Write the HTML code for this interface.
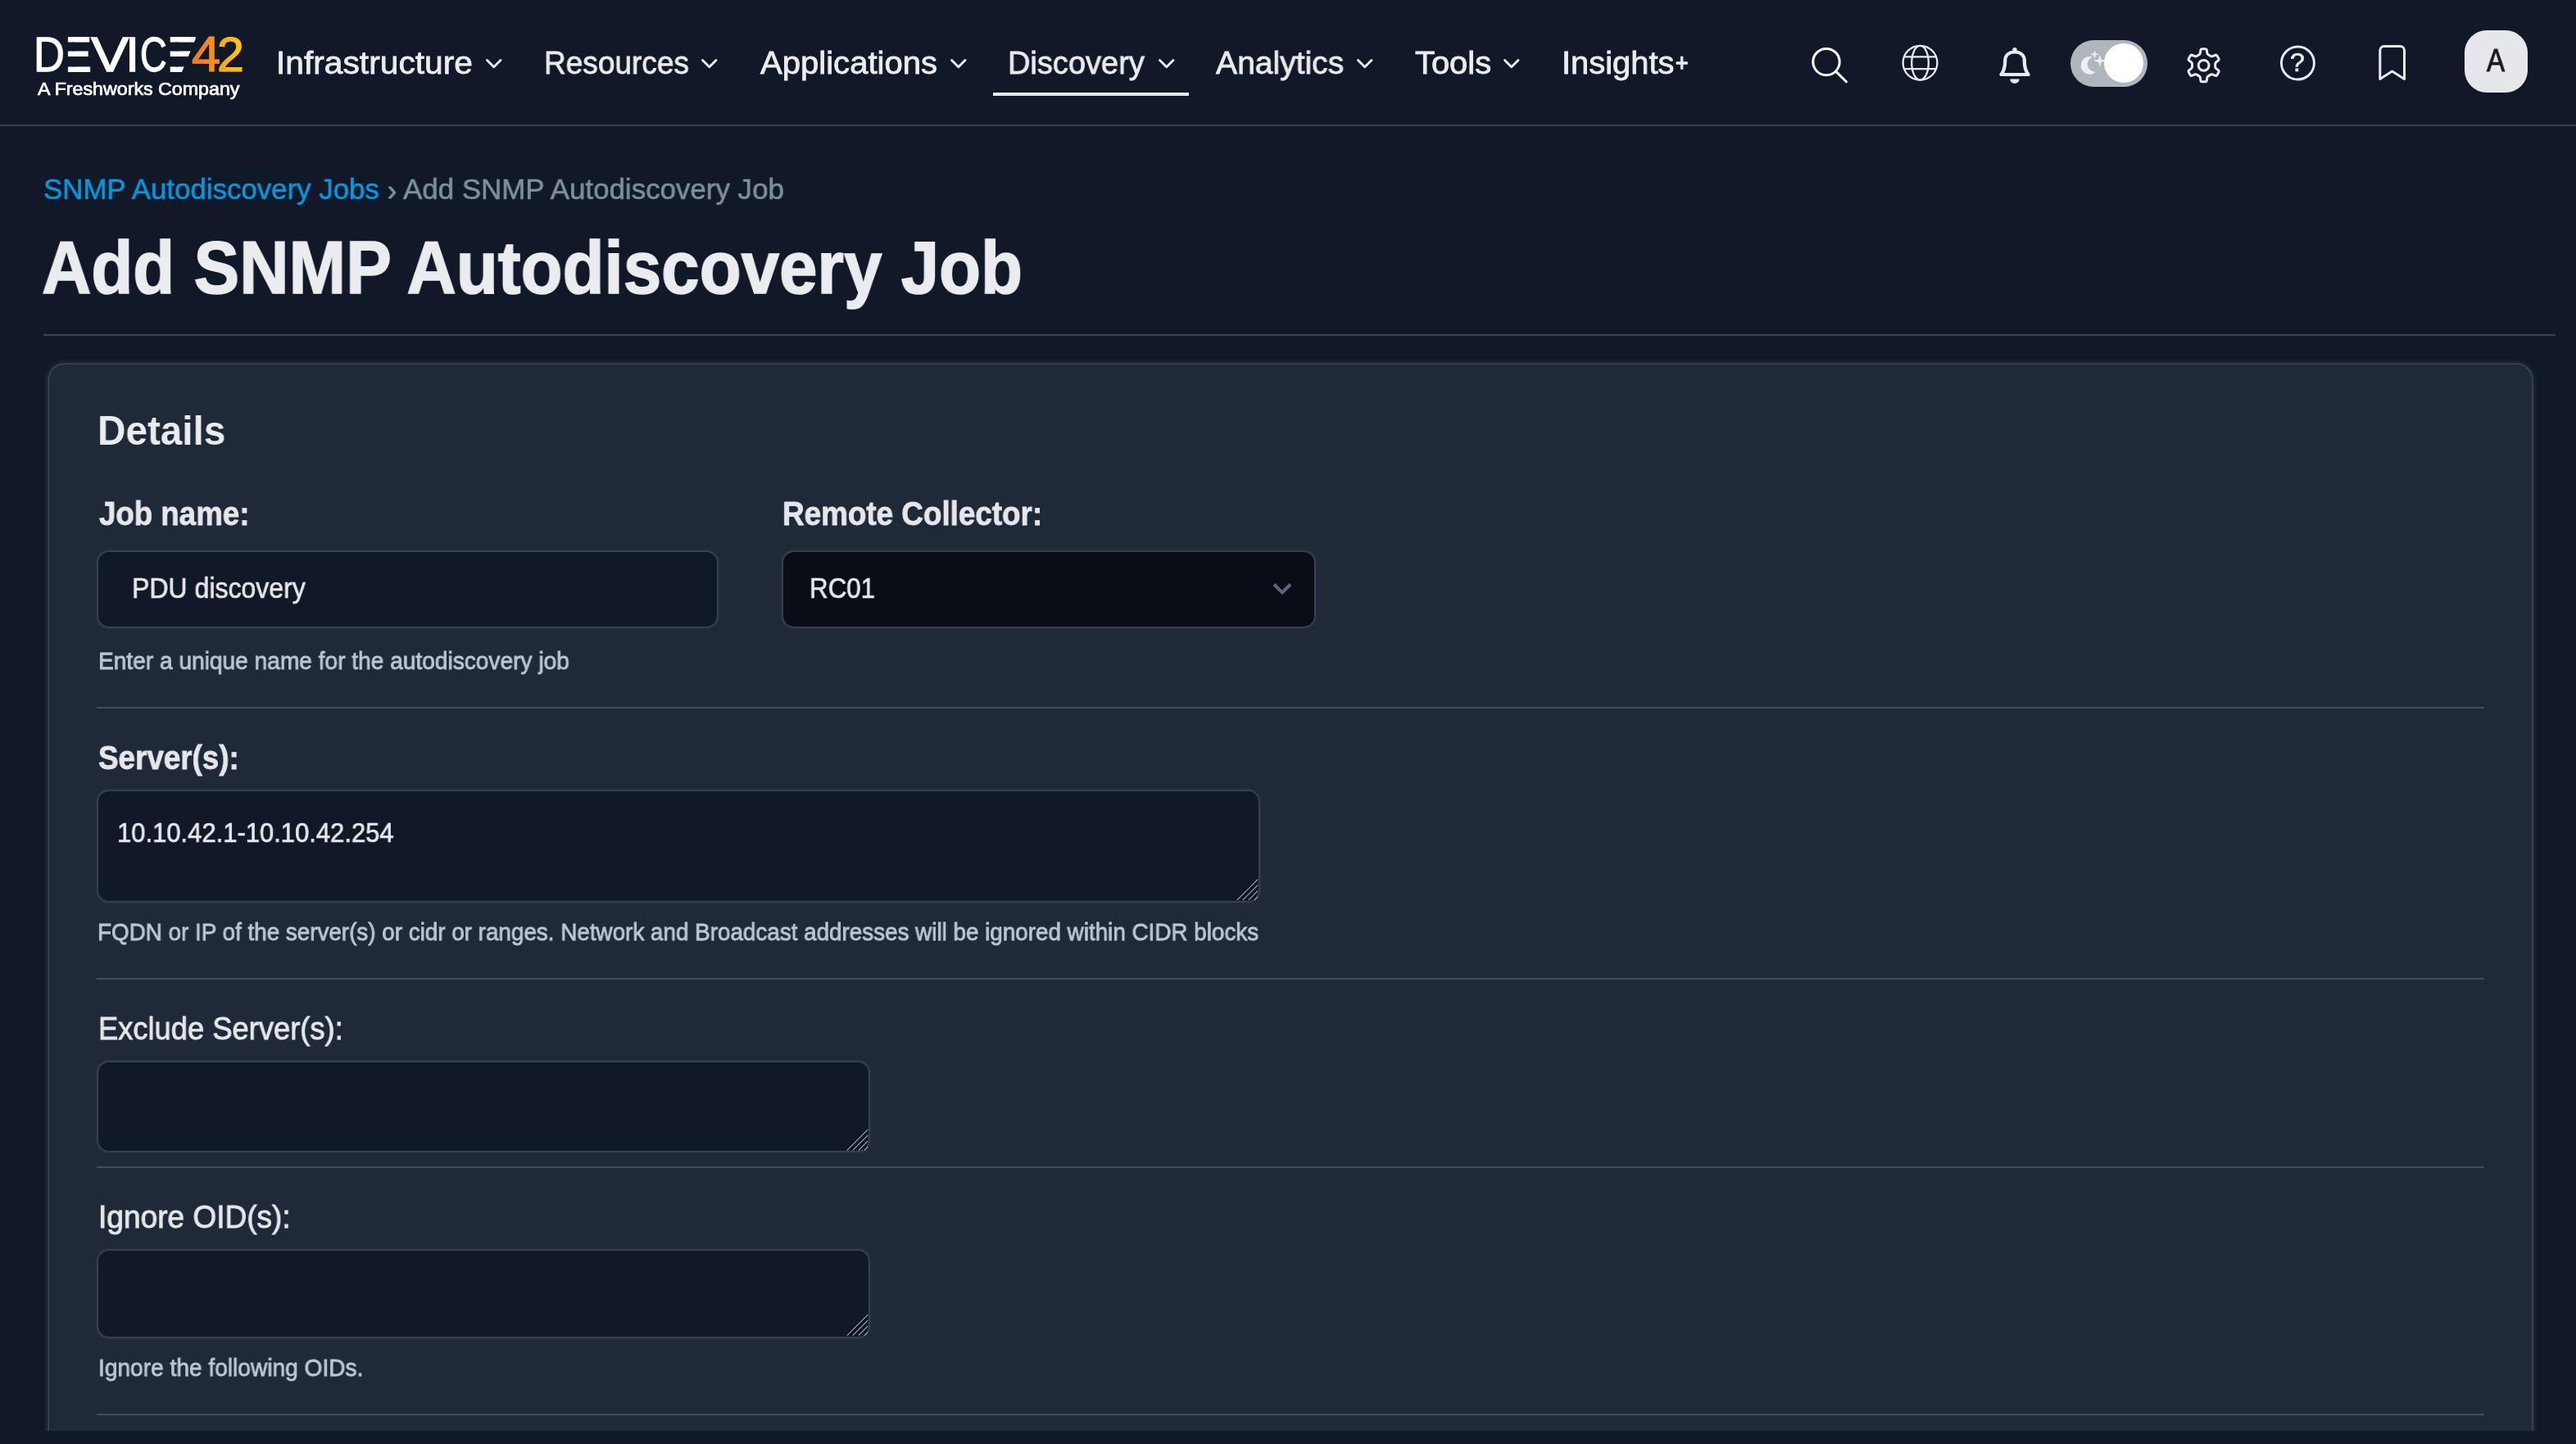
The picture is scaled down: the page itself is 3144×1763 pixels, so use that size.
<!DOCTYPE html>
<html lang="en"><head><meta charset="utf-8"><title>Add SNMP Autodiscovery Job</title>
<style>
html,body{margin:0;padding:0;}
body{width:3144px;height:1763px;overflow:hidden;background:#111827;position:relative;font-family:"Liberation Sans",sans-serif;}
.t{position:absolute;white-space:pre;line-height:1;transform-origin:0 0;display:block;will-change:transform;}
.abs{position:absolute;}
.hr{position:absolute;height:2px;background:#3a4454;}
.card{position:absolute;left:59.5px;top:445px;width:3030px;height:1400px;background:#1f2937;border-radius:19px;box-shadow:0 0 0 1.5px rgba(175,185,205,.16),0 0 7px 1px rgba(175,185,205,.28);box-sizing:border-box;}
.inp{position:absolute;background:#111827;border-radius:13px;box-sizing:border-box;box-shadow:0 0 3.5px 1px rgba(172,182,200,.33);}
.sel{background:#0a0d16;}
.g4{background:linear-gradient(90deg,#ee7727,#f7951d);-webkit-background-clip:text;background-clip:text;color:transparent !important;-webkit-text-stroke-color:rgba(243,134,34,.55) !important;}
.g2{background:linear-gradient(90deg,#f8a01b,#ffd200);-webkit-background-clip:text;background-clip:text;color:transparent !important;-webkit-text-stroke-color:rgba(252,186,14,.55) !important;}
svg{position:absolute;overflow:visible;}
</style></head>
<body>
<div class="abs" style="left:0;top:152px;width:3144px;height:2px;background:#343d4d"></div>
<div class="abs" style="left:1212px;top:113px;width:239px;height:4px;background:#ebecf0"></div>
<div class="hr" style="left:53px;top:408px;width:3066px"></div>
<div class="card"></div>
<div class="hr" style="left:118px;top:863px;width:2914px;background:#434c5b"></div>
<div class="hr" style="left:118px;top:1194px;width:2914px;background:#434c5b"></div>
<div class="hr" style="left:118px;top:1424px;width:2914px;background:#434c5b"></div>
<div class="hr" style="left:118px;top:1726px;width:2914px;background:#434c5b"></div>
<div class="inp" style="left:120px;top:674px;width:754.5px;height:91px"></div>
<div class="inp sel" style="left:956px;top:674px;width:648px;height:91px"></div>
<div class="inp" style="left:120px;top:966px;width:1415.7px;height:133.5px"></div>
<div class="inp" style="left:120px;top:1297px;width:940px;height:108px"></div>
<div class="inp" style="left:120px;top:1526.5px;width:940px;height:105px"></div>
<div class="abs" style="left:0;top:1747px;width:3144px;height:16px;background:#111827"></div>
<svg style="left:592.7px;top:70px" width="20" height="16" viewBox="0 0 20 16"><path d="M1.5 3.5 L9.75 11.7 L18 3.5" fill="none" stroke="#ebecf0" stroke-width="2.9" stroke-linecap="round" stroke-linejoin="round"/></svg>
<svg style="left:856px;top:70px" width="20" height="16" viewBox="0 0 20 16"><path d="M1.5 3.5 L9.75 11.7 L18 3.5" fill="none" stroke="#ebecf0" stroke-width="2.9" stroke-linecap="round" stroke-linejoin="round"/></svg>
<svg style="left:1160px;top:70px" width="20" height="16" viewBox="0 0 20 16"><path d="M1.5 3.5 L9.75 11.7 L18 3.5" fill="none" stroke="#ebecf0" stroke-width="2.9" stroke-linecap="round" stroke-linejoin="round"/></svg>
<svg style="left:1413.7px;top:70px" width="20" height="16" viewBox="0 0 20 16"><path d="M1.5 3.5 L9.75 11.7 L18 3.5" fill="none" stroke="#ebecf0" stroke-width="2.9" stroke-linecap="round" stroke-linejoin="round"/></svg>
<svg style="left:1656px;top:70px" width="20" height="16" viewBox="0 0 20 16"><path d="M1.5 3.5 L9.75 11.7 L18 3.5" fill="none" stroke="#ebecf0" stroke-width="2.9" stroke-linecap="round" stroke-linejoin="round"/></svg>
<svg style="left:1835px;top:70px" width="20" height="16" viewBox="0 0 20 16"><path d="M1.5 3.5 L9.75 11.7 L18 3.5" fill="none" stroke="#ebecf0" stroke-width="2.9" stroke-linecap="round" stroke-linejoin="round"/></svg>
<svg style="left:0;top:0" width="3144" height="160" viewBox="0 0 3144 160"><g fill="none" stroke="#ffffff" stroke-width="3" stroke-linecap="round"><circle cx="2229" cy="75.6" r="16.2"/><path d="M2240.8 87.4 L2253.4 99.8"/></g></svg>
<svg style="left:2320px;top:53px" width="48" height="48" viewBox="0 0 48 48"><g fill="none" stroke="#e8eaee" stroke-width="2.3"><circle cx="23.5" cy="23.7" r="20.9"/><ellipse cx="23.5" cy="23.7" rx="10.3" ry="20.9"/><path d="M4.5 16.4H42.5M4.5 31.2H42.5"/></g></svg>
<svg style="left:0;top:0" width="3144" height="160" viewBox="0 0 3144 160"><path d="M2442.4 91 C2446.8 85.5 2447.2 79.5 2447.2 74.5 C2447.2 67.5 2452 63.5 2459 63.5 C2466 63.5 2470.8 67.5 2470.8 74.5 C2470.8 79.5 2471.2 85.5 2475.6 91 Z" fill="none" stroke="#e8eaee" stroke-width="4.2" stroke-linecap="round" stroke-linejoin="round"/><circle cx="2459" cy="60.7" r="2.7" fill="#e8eaee"/><path d="M2453.2 96.4 h11.4 a5.7 5.6 0 0 1 -11.4 0 z" fill="#e8eaee"/></svg>
<div class="abs" style="left:2527px;top:49px;width:94px;height:57px;border-radius:29px;background:#b0b5be"></div>
<div class="abs" style="left:2568px;top:53px;width:48px;height:48px;border-radius:24px;background:#ffffff"></div>
<svg style="left:0;top:0" width="3144" height="160" viewBox="0 0 3144 160"><path d="M2554 69.6 A10.9 10.9 0 1 0 2558.3 87.6 A9.3 9.3 0 0 1 2554 69.6 Z" fill="#eceef2"/><path d="M2556.50 62.10 L2557.33 65.47 L2560.70 66.30 L2557.33 67.13 L2556.50 70.50 L2555.67 67.13 L2552.30 66.30 L2555.67 65.47Z" fill="#eceef2" stroke="#eceef2" stroke-width="1" stroke-linejoin="round"/><path d="M2562.80 68.20 L2563.99 73.01 L2568.80 74.20 L2563.99 75.39 L2562.80 80.20 L2561.61 75.39 L2556.80 74.20 L2561.61 73.01Z" fill="#eceef2" stroke="#eceef2" stroke-width="1.2" stroke-linejoin="round"/></svg>
<svg style="left:0;top:0" width="3144" height="160" viewBox="0 0 3144 160"><path d="M2695.18 66.75 L2695.18 66.75 Q2694.05 66.10 2693.85 64.82 L2693.29 61.09 Q2693.09 59.80 2691.79 59.80 L2687.41 59.80 Q2686.11 59.80 2685.91 61.09 L2685.35 64.82 Q2685.15 66.10 2684.02 66.75 L2681.09 68.45 Q2679.96 69.10 2678.75 68.63 L2675.24 67.25 Q2674.03 66.78 2673.38 67.90 L2671.19 71.70 Q2670.54 72.82 2671.55 73.64 L2674.50 75.99 Q2675.51 76.81 2675.51 78.11 L2675.51 81.49 Q2675.51 82.79 2674.50 83.61 L2671.55 85.96 Q2670.54 86.78 2671.19 87.90 L2673.38 91.70 Q2674.03 92.82 2675.24 92.35 L2678.75 90.97 Q2679.96 90.50 2681.09 91.15 L2684.02 92.85 Q2685.15 93.50 2685.35 94.78 L2685.91 98.51 Q2686.11 99.80 2687.41 99.80 L2691.79 99.80 Q2693.09 99.80 2693.29 98.51 L2693.85 94.78 Q2694.05 93.50 2695.18 92.85 L2698.11 91.15 Q2699.24 90.50 2700.45 90.97 L2703.96 92.35 Q2705.17 92.82 2705.82 91.70 L2708.01 87.90 Q2708.66 86.78 2707.65 85.96 L2704.70 83.61 Q2703.69 82.79 2703.69 81.49 L2703.69 78.11 Q2703.69 76.81 2704.70 75.99 L2707.65 73.64 Q2708.66 72.82 2708.01 71.70 L2705.82 67.90 Q2705.17 66.78 2703.96 67.25 L2700.45 68.63 Q2699.24 69.10 2698.11 68.45 Z" fill="none" stroke="#e8eaee" stroke-width="3" stroke-linejoin="round"/><circle cx="2689.6" cy="79.8" r="6.4" fill="none" stroke="#e8eaee" stroke-width="3"/></svg>
<svg style="left:0;top:0" width="3144" height="160" viewBox="0 0 3144 160"><circle cx="2804.4" cy="77" r="20" fill="none" stroke="#e8eaee" stroke-width="2.9"/></svg>
<svg style="left:0;top:0" width="3144" height="160" viewBox="0 0 3144 160"><path d="M2904.8 96.5 V61.5 a5 5 0 0 1 5 -5 h19.7 a5 5 0 0 1 5 5 V96.5 L2919.6 87 Z" fill="none" stroke="#e8eaee" stroke-width="3" stroke-linejoin="round"/></svg>
<div class="abs" style="left:3008px;top:37px;width:77px;height:76px;border-radius:27px;background:#e5e7eb"></div>
<svg style="left:0;top:600px" width="3144" height="200" viewBox="0 600 3144 200"><path d="M1555 713.5 L1565 723.5 L1575 713.5" fill="none" stroke="#5b6676" stroke-width="4"/></svg>
<svg style="left:0;top:0" width="3144" height="1763" viewBox="0 0 3144 1763"><path d="M1509.7 1099.0 L1535.2 1073.5" stroke="#0a0d15" stroke-width="1.6" transform="translate(-1.3,-0.6)"/><path d="M1509.7 1099.0 L1535.2 1073.5" stroke="#9a9fa9" stroke-width="1.1"/><path d="M1516.7 1099.0 L1535.2 1080.5" stroke="#0a0d15" stroke-width="1.6" transform="translate(-1.3,-0.6)"/><path d="M1516.7 1099.0 L1535.2 1080.5" stroke="#9a9fa9" stroke-width="1.1"/><path d="M1523.7 1099.0 L1535.2 1087.5" stroke="#0a0d15" stroke-width="1.6" transform="translate(-1.3,-0.6)"/><path d="M1523.7 1099.0 L1535.2 1087.5" stroke="#9a9fa9" stroke-width="1.1"/><path d="M1530.7 1099.0 L1535.2 1094.5" stroke="#0a0d15" stroke-width="1.6" transform="translate(-1.3,-0.6)"/><path d="M1530.7 1099.0 L1535.2 1094.5" stroke="#9a9fa9" stroke-width="1.1"/><path d="M1033.7 1404.5 L1059.2 1379.0" stroke="#0a0d15" stroke-width="1.6" transform="translate(-1.3,-0.6)"/><path d="M1033.7 1404.5 L1059.2 1379.0" stroke="#9a9fa9" stroke-width="1.1"/><path d="M1040.7 1404.5 L1059.2 1386.0" stroke="#0a0d15" stroke-width="1.6" transform="translate(-1.3,-0.6)"/><path d="M1040.7 1404.5 L1059.2 1386.0" stroke="#9a9fa9" stroke-width="1.1"/><path d="M1047.7 1404.5 L1059.2 1393.0" stroke="#0a0d15" stroke-width="1.6" transform="translate(-1.3,-0.6)"/><path d="M1047.7 1404.5 L1059.2 1393.0" stroke="#9a9fa9" stroke-width="1.1"/><path d="M1054.7 1404.5 L1059.2 1400.0" stroke="#0a0d15" stroke-width="1.6" transform="translate(-1.3,-0.6)"/><path d="M1054.7 1404.5 L1059.2 1400.0" stroke="#9a9fa9" stroke-width="1.1"/><path d="M1033.7 1630.5 L1059.2 1605.0" stroke="#0a0d15" stroke-width="1.6" transform="translate(-1.3,-0.6)"/><path d="M1033.7 1630.5 L1059.2 1605.0" stroke="#9a9fa9" stroke-width="1.1"/><path d="M1040.7 1630.5 L1059.2 1612.0" stroke="#0a0d15" stroke-width="1.6" transform="translate(-1.3,-0.6)"/><path d="M1040.7 1630.5 L1059.2 1612.0" stroke="#9a9fa9" stroke-width="1.1"/><path d="M1047.7 1630.5 L1059.2 1619.0" stroke="#0a0d15" stroke-width="1.6" transform="translate(-1.3,-0.6)"/><path d="M1047.7 1630.5 L1059.2 1619.0" stroke="#9a9fa9" stroke-width="1.1"/><path d="M1054.7 1630.5 L1059.2 1626.0" stroke="#0a0d15" stroke-width="1.6" transform="translate(-1.3,-0.6)"/><path d="M1054.7 1630.5 L1059.2 1626.0" stroke="#9a9fa9" stroke-width="1.1"/></svg>
<div class="logo"><span class="t" style="left:41.4px;top:38.0px;font-size:58.6px;font-weight:400;color:#ffffff;-webkit-text-stroke:1.3px #ffffff;transform:scaleX(0.8944)">D</span><span class="t" style="left:80.2px;top:38.0px;font-size:58.6px;font-weight:400;color:#ffffff;-webkit-text-stroke:1.9px #ffffff;transform:scaleX(0.8000)">E</span><span class="t" style="left:110.6px;top:38.0px;font-size:58.6px;font-weight:400;color:#ffffff;-webkit-text-stroke:1.3px #ffffff;transform:scaleX(1.1846)">V</span><span class="t" style="left:152.8px;top:38.0px;font-size:58.6px;font-weight:400;color:#ffffff;-webkit-text-stroke:1.3px #ffffff;transform:scaleX(1.0500)">I</span><span class="t" style="left:170.5px;top:38.0px;font-size:58.6px;font-weight:400;color:#ffffff;-webkit-text-stroke:1.3px #ffffff;transform:scaleX(0.7692)">C</span><span class="t" style="left:204.0px;top:38.0px;font-size:58.6px;font-weight:400;color:#ffffff;-webkit-text-stroke:1.9px #ffffff;transform:scaleX(0.9606)">E</span><svg style="left:0;top:0" width="320" height="100" viewBox="0 0 320 100"><path fill="#111827" d="M81.5 51.56H90.8V62.44H81.5ZM81.5 69H90.8V81.44H81.5ZM205.5 51.56H216.7V62.44H205.5ZM205.5 69H216.7V81.44H205.5ZM240.6 43H247V90H221.1Z"/></svg><span class="t g4" style="left:233.5px;top:36.6px;font-size:60.2px;font-weight:400;color:#f3832a;-webkit-text-stroke:1.2px #f3832a;transform:scaleX(1.0452)">4</span><span class="t g2" style="left:265.0px;top:37.7px;font-size:59.0px;font-weight:400;color:#fbb716;-webkit-text-stroke:1.2px #fbb716;transform:scaleX(1.0000)">2</span></div>
<span class="t" style="left:46.0px;top:99.1px;font-size:21.5px;font-weight:400;color:#ffffff;-webkit-text-stroke:0.7px #ffffff;transform:scaleX(1.0799)">A Freshworks Company</span>
<span class="t" style="left:337.3px;top:57.0px;font-size:39.2px;font-weight:400;color:#ebecf0;-webkit-text-stroke:0.8px #ebecf0;transform:scaleX(1.0394)">Infrastructure</span>
<span class="t" style="left:663.7px;top:57.0px;font-size:39.2px;font-weight:400;color:#ebecf0;-webkit-text-stroke:0.8px #ebecf0;transform:scaleX(0.9444)">Resources</span>
<span class="t" style="left:927.5px;top:57.0px;font-size:39.2px;font-weight:400;color:#ebecf0;-webkit-text-stroke:0.8px #ebecf0;transform:scaleX(1.0227)">Applications</span>
<span class="t" style="left:1229.9px;top:57.0px;font-size:39.2px;font-weight:400;color:#ebecf0;-webkit-text-stroke:0.8px #ebecf0;transform:scaleX(0.9692)">Discovery</span>
<span class="t" style="left:1484.0px;top:57.0px;font-size:39.2px;font-weight:400;color:#ebecf0;-webkit-text-stroke:0.8px #ebecf0;transform:scaleX(0.9961)">Analytics</span>
<span class="t" style="left:1727.0px;top:57.0px;font-size:39.2px;font-weight:400;color:#ebecf0;-webkit-text-stroke:0.8px #ebecf0;transform:scaleX(1.0177)">Tools</span>
<div class="grp"><span class="t grpA" style="left:1905.7px;top:57.0px;font-size:39.2px;font-weight:400;color:#ebecf0;-webkit-text-stroke:0.8px #ebecf0;transform:scaleX(1.0178)">Insights</span><span class="t grpB" style="left:2044.8px;top:62.0px;font-size:30px;font-weight:400;color:#ebecf0;-webkit-text-stroke:1.5px #ebecf0;transform:scaleX(0.8750)">+</span></div>
<span class="t" style="left:3035.0px;top:54.0px;font-size:39.1px;font-weight:400;color:#1a1a1a;-webkit-text-stroke:1.0px #1a1a1a;transform:scaleX(0.8462)">A</span>
<span class="t" style="left:2795.3px;top:61.1px;font-size:31.5px;font-weight:400;color:#e8eaee;-webkit-text-stroke:0.6px #e8eaee;transform:scaleX(1.0187)">?</span>
<span class="t" style="left:52.6px;top:214.4px;font-size:35.6px;font-weight:400;color:#0898e0;-webkit-text-stroke:0.6px #0898e0;transform:scaleX(0.9791)">SNMP Autodiscovery Jobs</span>
<span class="t" style="left:472.8px;top:213.7px;font-size:35px;font-weight:400;color:#7f909d;-webkit-text-stroke:1.0px #7f909d;transform:scaleX(0.9500)">›</span>
<span class="t" style="left:492.4px;top:214.4px;font-size:35.6px;font-weight:400;color:#7f909d;-webkit-text-stroke:0.6px #7f909d;transform:scaleX(0.9807)">Add SNMP Autodiscovery Job</span>
<span class="t" style="left:51.0px;top:281.0px;font-size:91.4px;font-weight:700;color:#ebecf0;-webkit-text-stroke:1.6px #ebecf0;transform:scaleX(0.9137)">Add SNMP Autodiscovery Job</span>
<span class="t" style="left:119.1px;top:501.2px;font-size:49.4px;font-weight:700;color:#ebecf0;transform:scaleX(0.9651)">Details</span>
<span class="t" style="left:121.0px;top:607.0px;font-size:41.4px;font-weight:700;color:#e5e7eb;-webkit-text-stroke:0.8px #e5e7eb;transform:scaleX(0.8858)">Job name:</span>
<span class="t" style="left:955.2px;top:607.0px;font-size:41.4px;font-weight:700;color:#e5e7eb;-webkit-text-stroke:0.8px #e5e7eb;transform:scaleX(0.8897)">Remote Collector:</span>
<span class="t" style="left:161.2px;top:700.8px;font-size:35.9px;font-weight:400;color:#e5e7eb;-webkit-text-stroke:0.7px #e5e7eb;transform:scaleX(0.8921)">PDU discovery</span>
<span class="t" style="left:988.3px;top:700.8px;font-size:35.9px;font-weight:400;color:#e5e7eb;-webkit-text-stroke:0.7px #e5e7eb;transform:scaleX(0.8728)">RC01</span>
<span class="t" style="left:119.6px;top:792.3px;font-size:29.7px;font-weight:400;color:#bcc6d4;-webkit-text-stroke:0.8px #bcc6d4;transform:scaleX(0.9466)">Enter a unique name for the autodiscovery job</span>
<span class="t" style="left:120.1px;top:905.2px;font-size:40.6px;font-weight:700;color:#e5e7eb;-webkit-text-stroke:0.8px #e5e7eb;transform:scaleX(0.9068)">Server(s):</span>
<span class="t" style="left:143.3px;top:999.9px;font-size:33.4px;font-weight:400;color:#e5e7eb;-webkit-text-stroke:0.7px #e5e7eb;transform:scaleX(0.9277)">10.10.42.1-10.10.42.254</span>
<span class="t" style="left:119.1px;top:1122.8px;font-size:29.5px;font-weight:400;color:#bcc6d4;-webkit-text-stroke:0.8px #bcc6d4;transform:scaleX(0.9429)">FQDN or IP of the server(s) or cidr or ranges. Network and Broadcast addresses will be ignored within CIDR blocks</span>
<span class="t" style="left:120.0px;top:1235.5px;font-size:39.5px;font-weight:400;color:#e5e7eb;-webkit-text-stroke:0.9px #e5e7eb;transform:scaleX(0.9194)">Exclude Server(s):</span>
<span class="t" style="left:120.0px;top:1465.5px;font-size:39.5px;font-weight:400;color:#e5e7eb;-webkit-text-stroke:0.9px #e5e7eb;transform:scaleX(0.9379)">Ignore OID(s):</span>
<span class="t" style="left:119.8px;top:1654.7px;font-size:29.4px;font-weight:400;color:#bcc6d4;-webkit-text-stroke:0.8px #bcc6d4;transform:scaleX(0.9563)">Ignore the following OIDs.</span>

</body></html>
